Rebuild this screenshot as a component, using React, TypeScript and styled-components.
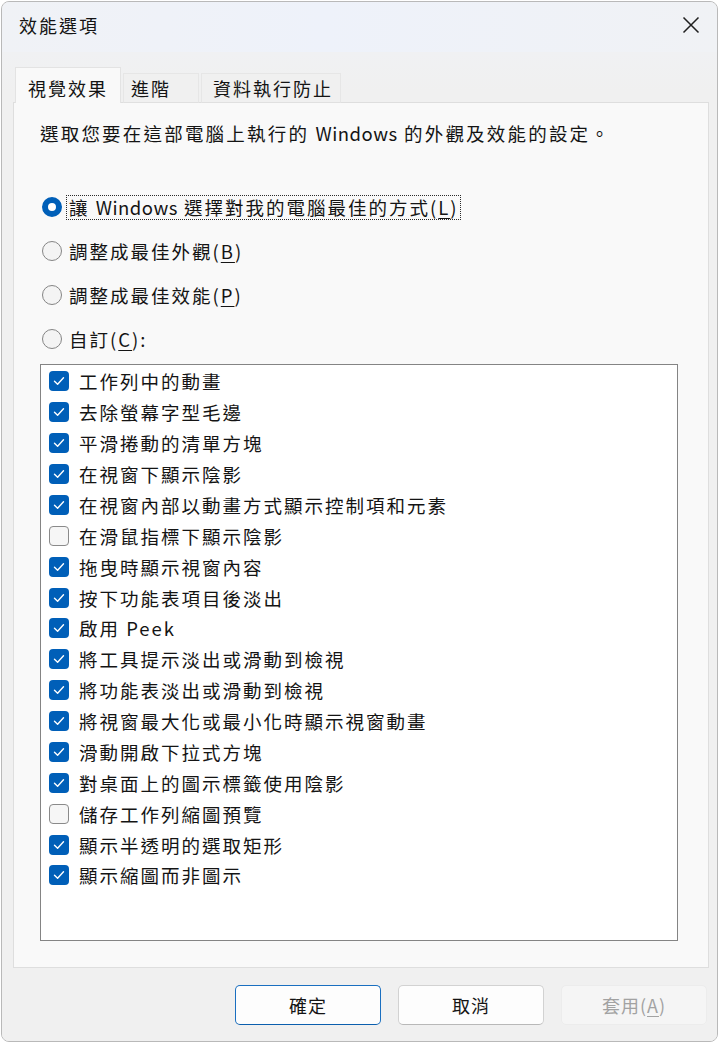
import React from "react";
import styled, { createGlobalStyle } from "styled-components";

const Global = createGlobalStyle`
  html, body { margin: 0; padding: 0; background: #ffffff; }
  body {
    font-family: "Noto Sans CJK TC", "Noto Sans", sans-serif;
    color: #141414;
  }
  * { box-sizing: border-box; }
`;

const Window = styled.div`
  margin: 1px 0 0 1px;
  width: 717px;
  height: 1041px;
  border: 1px solid #b9b9b9;
  border-radius: 8px;
  background: #f0f0f0;
  overflow: hidden;
  display: flex;
  flex-direction: column;
`;

const TitleBar = styled.div`
  height: 50px;
  flex: none;
  display: flex;
  align-items: center;
  justify-content: space-between;
  padding: 0 12px 4px 17px;
  background: linear-gradient(90deg, #f0f2f6 0%, #eef2fa 45%, #f0f2f5 100%);
`;

const Title = styled.div`
  font-size: 18px;
  letter-spacing: 2px;
  line-height: 22px;
`;

const CloseBtn = styled.div`
  width: 28px;
  height: 28px;
  display: flex;
  align-items: center;
  justify-content: center;
`;

const Body = styled.div`
  flex: 1;
  display: flex;
  flex-direction: column;
  padding: 15px 8px 0 11px;
  background: linear-gradient(180deg, #f0f1f3 0px, #f0f0f0 40px);
`;

const TabRow = styled.div`
  display: flex;
  align-items: flex-end;
  gap: 2px;
  padding-left: 2px;
  height: 36px;
  position: relative;
  z-index: 1;
  margin-bottom: -1px;
`;

const Tab = styled.div<{ $active?: boolean; $w: number; $pl: number }>`
  width: ${(p) => p.$w}px;
  height: ${(p) => (p.$active ? 36 : 30)}px;
  padding-left: ${(p) => p.$pl}px;
  display: flex;
  align-items: center;
  padding-top: ${(p) => (p.$active ? 4 : 0)}px;
  font-size: 18px;
  letter-spacing: 2px;
  background: ${(p) => (p.$active ? "#f9f9f9" : "#f0f0f0")};
  border: 1px solid ${(p) => (p.$active ? "#e3e3e3" : "#e6e6e6")};
  border-bottom: ${(p) => (p.$active ? "none" : "1px solid #e0e0e0")};
`;

const Panel = styled.div`
  height: 866px;
  border: 1px solid #dedede;
  background: #f9f9f9;
  padding: 19px 0 0 26px;
  display: flex;
  flex-direction: column;
`;

const Desc = styled.div`
  font-size: 18.5px;
  letter-spacing: 2.2px;
  line-height: 22px;
  height: 22px;
  white-space: nowrap;
`;

const Latin = styled.span`
  letter-spacing: 0.5px;
`;

const RadioGroup = styled.div`
  display: flex;
  flex-direction: column;
  margin-top: 41px;
  margin-left: 2px;
`;

const RadioRow = styled.div`
  display: flex;
  align-items: center;
  height: 44px;
  gap: 4px;
`;

const RadioDot = styled.div<{ $on?: boolean }>`
  width: 20px;
  height: 20px;
  border-radius: 50%;
  flex: none;
  background: ${(p) => (p.$on ? "#ffffff" : "#f4f4f4")};
  border: ${(p) => (p.$on ? "6px solid #005fb8" : "1.5px solid #858585")};
`;

const Label = styled.span<{ $focus?: boolean }>`
  font-size: 18.5px;
  letter-spacing: 2px;
  line-height: 21px;
  padding: 1px 1px 1px 2px;
  border: 1px dotted ${(p) => (p.$focus ? "#2b2b2b" : "transparent")};
  white-space: nowrap;
`;

const Key = styled.span`
  text-decoration: underline;
  text-underline-offset: 3px;
  text-decoration-thickness: 1px;
`;

const ListBox = styled.div`
  margin-top: 3px;
  width: 638px;
  height: 577px;
  border: 1px solid #848484;
  background: #ffffff;
  padding: 1px 0 0 8px;
  display: flex;
  flex-direction: column;
`;

const CheckRow = styled.div`
  display: flex;
  align-items: center;
  height: 30.875px;
  gap: 10px;
`;

const Box = styled.div<{ $on?: boolean }>`
  width: 20px;
  height: 20px;
  border-radius: 4px;
  flex: none;
  display: flex;
  align-items: center;
  justify-content: center;
  background: ${(p) => (p.$on ? "#005fb8" : "#f6f6f6")};
  border: ${(p) => (p.$on ? "none" : "1.5px solid #8a8a8a")};
`;

const ItemText = styled.span`
  font-size: 18.5px;
  letter-spacing: 2px;
  line-height: 22px;
  white-space: nowrap;
`;

const Footer = styled.div`
  flex: 1;
  display: flex;
  justify-content: flex-end;
  align-items: flex-start;
  gap: 17px;
  padding: 17px 2px 0 0;
`;

const Button = styled.div<{ $kind: "default" | "normal" | "disabled" }>`
  width: 146px;
  height: 40px;
  border-radius: 5px;
  display: flex;
  align-items: center;
  justify-content: center;
  font-size: 18px;
  letter-spacing: 1px;
  color: ${(p) => (p.$kind === "disabled" ? "#a2a2a2" : "#141414")};
  background: ${(p) => (p.$kind === "disabled" ? "#f5f5f5" : "#fdfdfd")};
  border: ${(p) =>
    p.$kind === "default"
      ? "1.5px solid #1a6fc0"
      : p.$kind === "normal"
      ? "1px solid #d2d2d2"
      : "1px solid #ececec"};
  border-bottom-color: ${(p) =>
    p.$kind === "default" ? "#0b5fae" : p.$kind === "normal" ? "#b8b8b8" : "#ececec"};
`;

const Check = () => (
  <svg width="12" height="10" viewBox="0 0 12 10">
    <path d="M1.5 5.2 L4.6 8.2 L10.5 1.8" fill="none" stroke="#ffffff" strokeWidth="1.4" strokeLinecap="round" strokeLinejoin="round" />
  </svg>
);

const items: [string, boolean][] = [
  ["工作列中的動畫", true],
  ["去除螢幕字型毛邊", true],
  ["平滑捲動的清單方塊", true],
  ["在視窗下顯示陰影", true],
  ["在視窗內部以動畫方式顯示控制項和元素", true],
  ["在滑鼠指標下顯示陰影", false],
  ["拖曳時顯示視窗內容", true],
  ["按下功能表項目後淡出", true],
  ["啟用 Peek", true],
  ["將工具提示淡出或滑動到檢視", true],
  ["將功能表淡出或滑動到檢視", true],
  ["將視窗最大化或最小化時顯示視窗動畫", true],
  ["滑動開啟下拉式方塊", true],
  ["對桌面上的圖示標籤使用陰影", true],
  ["儲存工作列縮圖預覽", false],
  ["顯示半透明的選取矩形", true],
  ["顯示縮圖而非圖示", true],
];

export default function App() {
  return (
    <>
      <Global />
      <Window lang="zh-Hant-TW">
        <TitleBar>
          <Title>效能選項</Title>
          <CloseBtn>
            <svg width="18" height="18" viewBox="0 0 18 18">
              <path d="M1.5 1.5 L16.5 16.5 M16.5 1.5 L1.5 16.5" stroke="#1f1f1f" strokeWidth="1.5" fill="none" />
            </svg>
          </CloseBtn>
        </TitleBar>
        <Body>
          <TabRow>
            <Tab $active $w={106} $pl={12}>視覺效果</Tab>
            <Tab $w={76} $pl={7}>進階</Tab>
            <Tab $w={140} $pl={11}>資料執行防止</Tab>
          </TabRow>
          <Panel>
            <Desc>
              選取您要在這部電腦上執行的 <Latin>Windows</Latin> 的外觀及效能的設定。
            </Desc>
            <RadioGroup>
              <RadioRow>
                <RadioDot $on />
                <Label $focus>
                  讓 <Latin>Windows</Latin> 選擇對我的電腦最佳的方式(<Key>L</Key>)
                </Label>
              </RadioRow>
              <RadioRow>
                <RadioDot />
                <Label>調整成最佳外觀(<Key>B</Key>)</Label>
              </RadioRow>
              <RadioRow>
                <RadioDot />
                <Label>調整成最佳效能(<Key>P</Key>)</Label>
              </RadioRow>
              <RadioRow>
                <RadioDot />
                <Label>自訂(<Key>C</Key>):</Label>
              </RadioRow>
            </RadioGroup>
            <ListBox>
              {items.map(([t, on]) => (
                <CheckRow key={t}>
                  <Box $on={on}>{on && <Check />}</Box>
                  <ItemText>{t}</ItemText>
                </CheckRow>
              ))}
            </ListBox>
          </Panel>
          <Footer>
            <Button $kind="default">確定</Button>
            <Button $kind="normal">取消</Button>
            <Button $kind="disabled">
              套用(<Key>A</Key>)
            </Button>
          </Footer>
        </Body>
      </Window>
    </>
  );
}
